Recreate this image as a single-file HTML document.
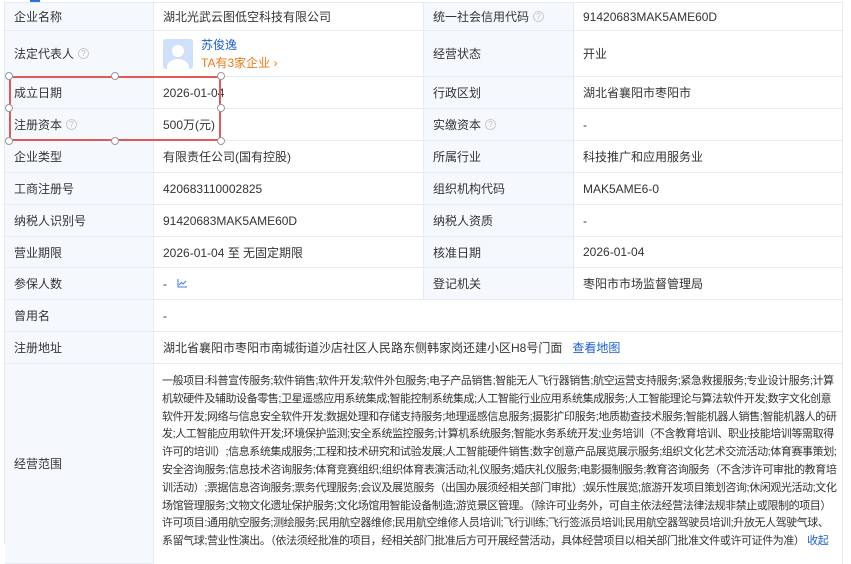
<!DOCTYPE html>
<html><head><meta charset="utf-8"><style>
*{margin:0;padding:0;box-sizing:border-box}
body{width:851px;height:544px;overflow:hidden;background:#fff;font-family:"Liberation Sans","Noto Sans CJK SC",sans-serif;font-size:12px;color:#333;position:relative}
.c{position:absolute;border-right:1px solid #e4ebf5;border-bottom:1px solid #e4ebf5;display:flex;align-items:center;padding-left:9px;white-space:nowrap}
.l{background:#f5f9fe;color:#333}
.q{display:inline-block;width:11px;height:11px;border:1px solid #ccc;border-radius:50%;font-size:8px;color:#bbb;line-height:9px;text-align:center;margin-left:4px}
.h{position:absolute;width:8px;height:8px;border:1.5px solid #999;border-radius:50%;background:#fff}
.bt{position:absolute;left:154px;top:364px;width:689px;height:200px;border-right:1px solid #e4ebf5;padding:9px 0 0 8px;line-height:17.8px;font-size:11px;letter-spacing:-0.42px;white-space:nowrap;overflow:hidden}
</style></head><body>
<div style="position:absolute;left:30px;top:0;width:10px;height:2px;background:#2b6fe0"></div>
<div style="position:absolute;left:4px;top:2px;width:839px;height:1px;background:#e4ebf5"></div>
<div style="position:absolute;left:4px;top:2px;width:1px;height:542px;background:#e4ebf5"></div>

<div class="c l" style="left:5px;top:3px;width:149px;height:28px">企业名称</div>
<div class="c" style="left:154px;top:3px;width:270px;height:28px">湖北光武云图低空科技有限公司</div>
<div class="c l" style="left:424px;top:3px;width:150px;height:28px">统一社会信用代码<span class="q">?</span></div>
<div class="c" style="left:574px;top:3px;width:269px;height:28px">91420683MAK5AME60D</div>

<div class="c l" style="left:5px;top:31px;width:149px;height:46px">法定代表人<span class="q">?</span></div>
<div class="c" style="left:154px;top:31px;width:270px;height:46px"><div style="width:30px;height:30px;background:#cfe0fa;border-radius:3px;margin-right:8px;position:relative;overflow:hidden"><div style="position:absolute;left:9px;top:6px;width:12px;height:12px;border-radius:50%;background:#fff"></div><div style="position:absolute;left:4px;top:20px;width:22px;height:16px;border-radius:50%;background:#fff"></div></div><div style="line-height:18px"><div style="color:#1a5fd6">苏俊逸</div><div style="color:#f07a1a">TA有3家企业 ›</div></div></div>
<div class="c l" style="left:424px;top:31px;width:150px;height:46px">经营状态</div>
<div class="c" style="left:574px;top:31px;width:269px;height:46px">开业</div>

<div class="c l" style="left:5px;top:77px;width:149px;height:32px">成立日期</div>
<div class="c" style="left:154px;top:77px;width:270px;height:32px">2026-01-04</div>
<div class="c l" style="left:424px;top:77px;width:150px;height:32px">行政区划</div>
<div class="c" style="left:574px;top:77px;width:269px;height:32px">湖北省襄阳市枣阳市</div>

<div class="c l" style="left:5px;top:109px;width:149px;height:32px">注册资本<span class="q">?</span></div>
<div class="c" style="left:154px;top:109px;width:270px;height:32px">500万(元)</div>
<div class="c l" style="left:424px;top:109px;width:150px;height:32px">实缴资本<span class="q">?</span></div>
<div class="c" style="left:574px;top:109px;width:269px;height:32px">-</div>

<div class="c l" style="left:5px;top:141px;width:149px;height:32px">企业类型</div>
<div class="c" style="left:154px;top:141px;width:270px;height:32px">有限责任公司(国有控股)</div>
<div class="c l" style="left:424px;top:141px;width:150px;height:32px">所属行业</div>
<div class="c" style="left:574px;top:141px;width:269px;height:32px">科技推广和应用服务业</div>

<div class="c l" style="left:5px;top:173px;width:149px;height:32px">工商注册号</div>
<div class="c" style="left:154px;top:173px;width:270px;height:32px">420683110002825</div>
<div class="c l" style="left:424px;top:173px;width:150px;height:32px">组织机构代码</div>
<div class="c" style="left:574px;top:173px;width:269px;height:32px">MAK5AME6-0</div>

<div class="c l" style="left:5px;top:205px;width:149px;height:32px">纳税人识别号</div>
<div class="c" style="left:154px;top:205px;width:270px;height:32px">91420683MAK5AME60D</div>
<div class="c l" style="left:424px;top:205px;width:150px;height:32px">纳税人资质</div>
<div class="c" style="left:574px;top:205px;width:269px;height:32px">-</div>

<div class="c l" style="left:5px;top:237px;width:149px;height:31px">营业期限</div>
<div class="c" style="left:154px;top:237px;width:270px;height:31px">2026-01-04 至 无固定期限</div>
<div class="c l" style="left:424px;top:237px;width:150px;height:31px">核准日期</div>
<div class="c" style="left:574px;top:237px;width:269px;height:31px">2026-01-04</div>

<div class="c l" style="left:5px;top:268px;width:149px;height:32px">参保人数</div>
<div class="c" style="left:154px;top:268px;width:270px;height:32px">-&nbsp;&nbsp;&nbsp;<svg width="10" height="9" viewBox="0 0 10 9"><path d="M1 0V8H10M2 6L4.5 3.5L6 5L9 2" stroke="#3b7be8" fill="none" stroke-width="1"/></svg></div>
<div class="c l" style="left:424px;top:268px;width:150px;height:32px">登记机关</div>
<div class="c" style="left:574px;top:268px;width:269px;height:32px">枣阳市市场监督管理局</div>

<div class="c l" style="left:5px;top:300px;width:149px;height:32px">曾用名</div>
<div class="c" style="left:154px;top:300px;width:689px;height:32px">-</div>

<div class="c l" style="left:5px;top:332px;width:149px;height:32px">注册地址</div>
<div class="c" style="left:154px;top:332px;width:689px;height:32px">湖北省襄阳市枣阳市南城街道沙店社区人民路东侧韩家岗还建小区H8号门面&nbsp;&nbsp;&nbsp;<span style="color:#1a5fd6">查看地图</span></div>

<div class="c l" style="left:5px;top:364px;width:149px;height:200px">经营范围</div>
<div class="bt">一般项目:科普宣传服务;软件销售;软件开发;软件外包服务;电子产品销售;智能无人飞行器销售;航空运营支持服务;紧急救援服务;专业设计服务;计算<br>机软硬件及辅助设备零售;卫星遥感应用系统集成;智能控制系统集成;人工智能行业应用系统集成服务;人工智能理论与算法软件开发;数字文化创意<br>软件开发;网络与信息安全软件开发;数据处理和存储支持服务;地理遥感信息服务;摄影扩印服务;地质勘查技术服务;智能机器人销售;智能机器人的研<br>发;人工智能应用软件开发;环境保护监测;安全系统监控服务;计算机系统服务;智能水务系统开发;业务培训（不含教育培训、职业技能培训等需取得<br>许可的培训）;信息系统集成服务;工程和技术研究和试验发展;人工智能硬件销售;数字创意产品展览展示服务;组织文化艺术交流活动;体育赛事策划;<br>安全咨询服务;信息技术咨询服务;体育竞赛组织;组织体育表演活动;礼仪服务;婚庆礼仪服务;电影摄制服务;教育咨询服务（不含涉许可审批的教育培<br>训活动）;票据信息咨询服务;票务代理服务;会议及展览服务（出国办展须经相关部门审批）;娱乐性展览;旅游开发项目策划咨询;休闲观光活动;文化<br>场馆管理服务;文物文化遗址保护服务;文化场馆用智能设备制造;游览景区管理。（除许可业务外，可自主依法经营法律法规非禁止或限制的项目）<br>许可项目:通用航空服务;测绘服务;民用航空器维修;民用航空维修人员培训;飞行训练;飞行签派员培训;民用航空器驾驶员培训;升放无人驾驶气球、<br>系留气球;营业性演出。（依法须经批准的项目，经相关部门批准后方可开展经营活动，具体经营项目以相关部门批准文件或许可证件为准） <span style="color:#1a5fd6">收起</span></div>

<div style="position:absolute;left:9px;top:76px;width:212px;height:65px;border:2px solid #e05a5a"></div>
<div class="h" style="left:5px;top:72px"></div><div class="h" style="left:111px;top:72px"></div><div class="h" style="left:217px;top:72px"></div>
<div class="h" style="left:5px;top:104px"></div><div class="h" style="left:217px;top:104px"></div>
<div class="h" style="left:5px;top:137px"></div><div class="h" style="left:111px;top:137px"></div><div class="h" style="left:217px;top:137px"></div>
</body></html>
